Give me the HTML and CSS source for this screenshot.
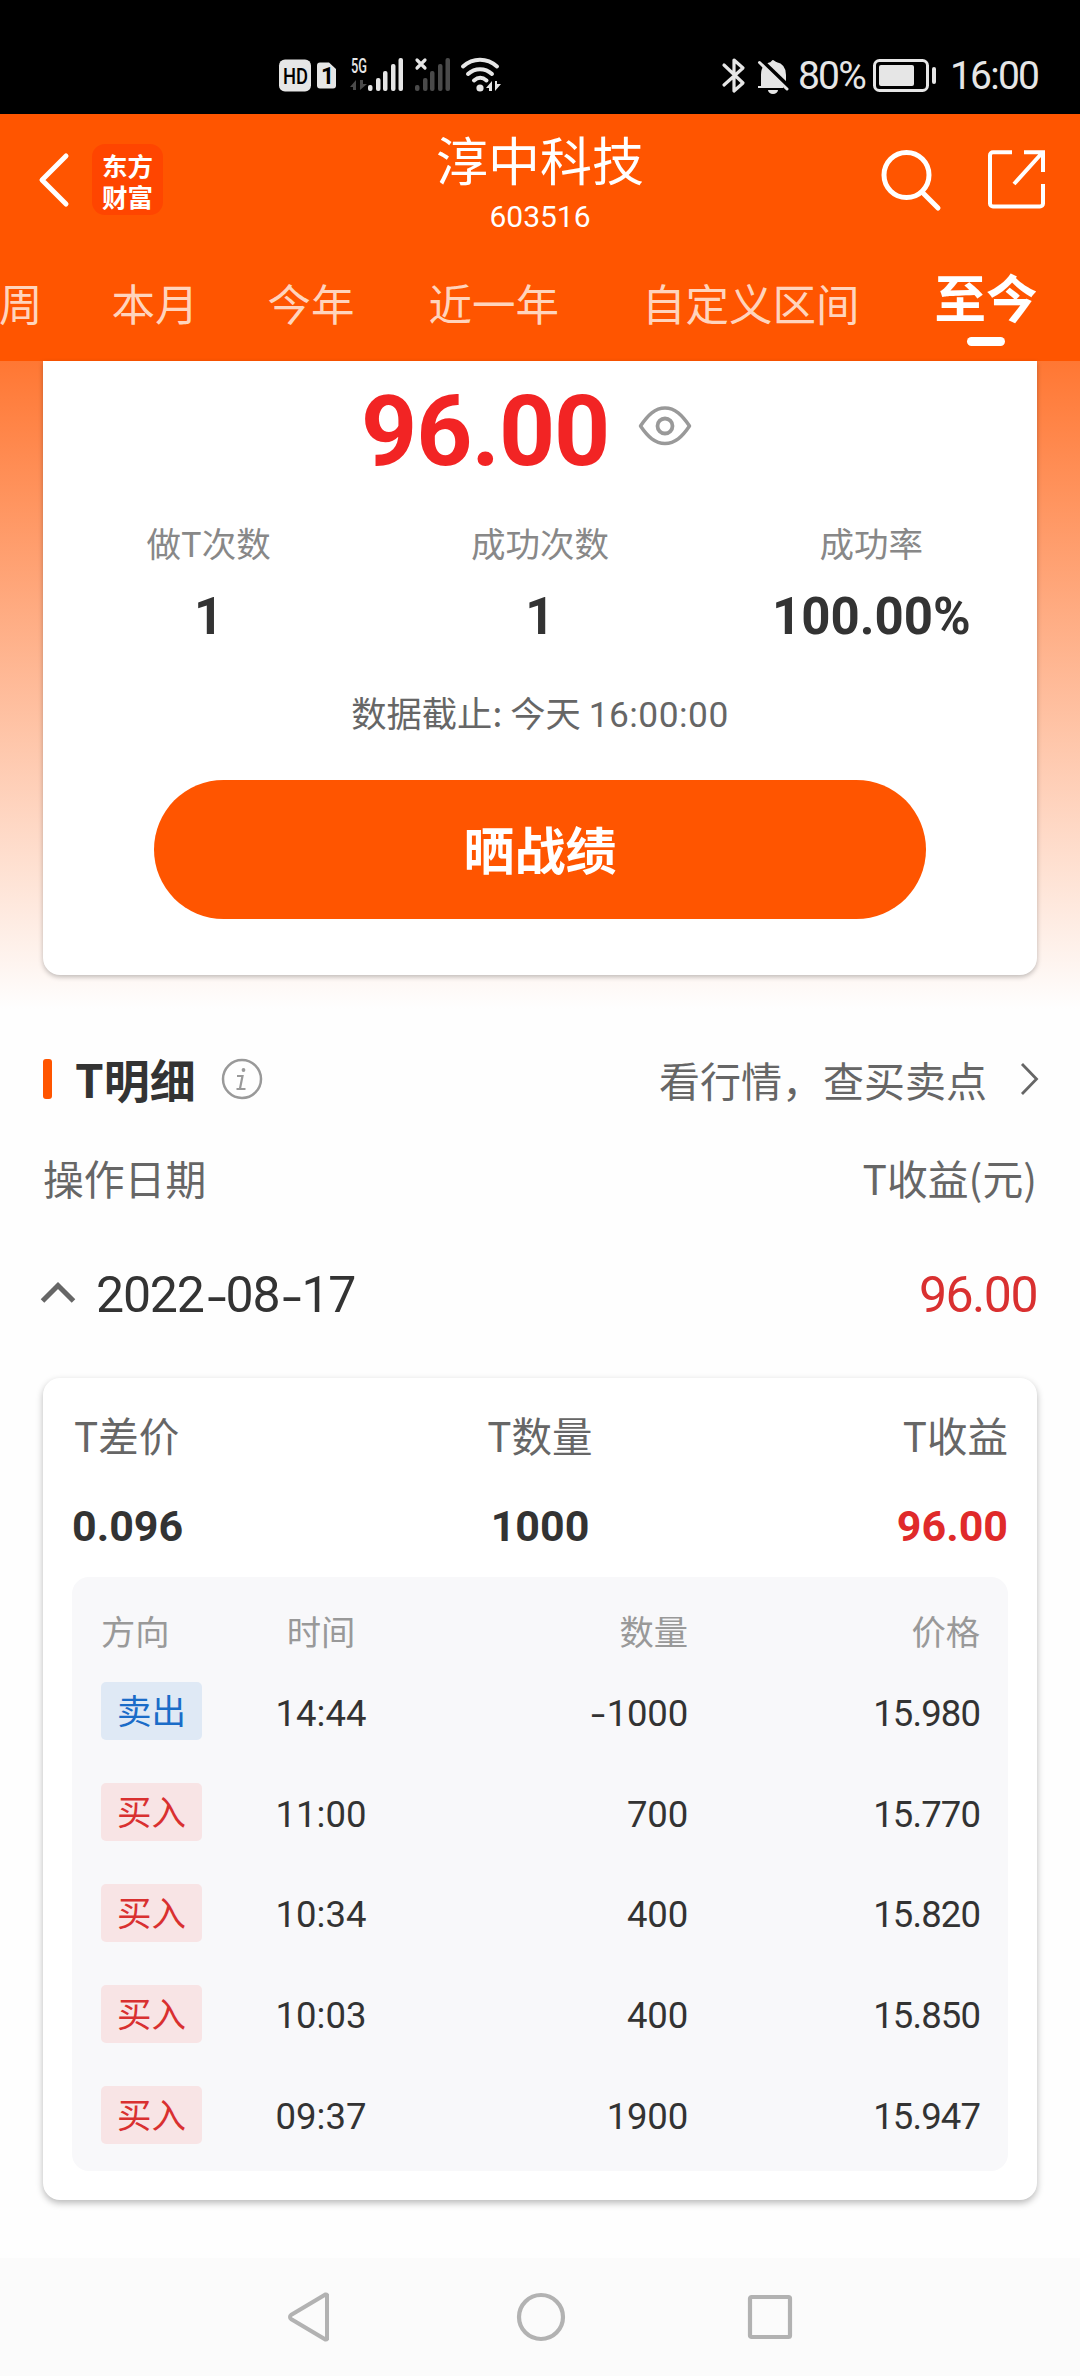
FILE: index.html
```html
<!DOCTYPE html>
<html lang="zh-CN">
<head>
<meta charset="utf-8">
<title>淳中科技 603516</title>
<link rel="stylesheet" href="styles.css">
</head>
<body>
<div class="status">
  <svg class="status-left" width="226" height="40" viewBox="0 0 226 40">
    <rect x="0" y="3.500" width="32" height="32" rx="6" fill="#e6e6e6"/>
    <text x="4" y="28" class="hd" textLength="25" lengthAdjust="spacingAndGlyphs">HD</text>
    <path d="M41 6.500h9l7 6.500v16.500a3 3 0 0 1-3 3H41a3 3 0 0 1-3-3v-20a3 3 0 0 1 3-3z" fill="#e6e6e6"/>
    <text x="42" y="28" class="one">1</text>
    <text x="72" y="17" class="net" textLength="16" lengthAdjust="spacingAndGlyphs">5G</text>
    <g fill="#4a4a4a"><path d="M77 34V24l-6 7h3v3zM81 24v10l7-6h-4v-4z"/>
      <rect x="136" y="29" width="4.500" height="6" rx="2"/><rect x="144" y="22" width="4.500" height="13" rx="2"/><rect x="151" y="15" width="4.500" height="20" rx="2"/><rect x="159" y="8" width="4.500" height="27" rx="2"/><rect x="166.500" y="2" width="4.500" height="33" rx="2"/></g>
    <g fill="#e6e6e6"><rect x="89" y="29" width="4.500" height="6" rx="2"/><rect x="97" y="22" width="4.500" height="13" rx="2"/><rect x="104" y="15" width="4.500" height="20" rx="2"/><rect x="112" y="8" width="4.500" height="27" rx="2"/><rect x="119.500" y="2" width="4.500" height="33" rx="2"/></g>
    <path d="M138 4l8 8M146 4l-8 8" stroke="#e6e6e6" stroke-width="3.200" stroke-linecap="round"/>
    <g fill="none" stroke="#e6e6e6" stroke-width="4" stroke-linecap="round"><path d="M184 10.500C194 1.500 208 1.500 218 10.500M189 18c7-6.500 17-6.500 24 0M195 24.500c4-3.500 8.500-3.500 12.500 0"/></g>
    <circle cx="201" cy="32" r="3.600" fill="#e6e6e6"/>
    <path d="M213 35V25l-6 7h3v3zM216 25v10l6-7h-4v-3z" fill="#e6e6e6"/>
  </svg>
  <div class="status-right">
    <svg width="72" height="40" viewBox="0 0 72 40">
      <path d="M3 9l19 18-9 8V4l9 8L3 29" fill="none" stroke="#e6e6e6" stroke-width="3.200" stroke-linecap="round" stroke-linejoin="round"/>
      <path d="M37 31h25M41 30V19c0-7 4-11 9-12l2-2 3 2c5 1 9 5 9 12v11z" fill="#e6e6e6" stroke="#e6e6e6" stroke-width="2" stroke-linejoin="round"/>
      <path d="M47 34h10a5 4 0 0 1-10 0z" fill="#e6e6e6"/>
      <path d="M40 4l28 27" stroke="#000" stroke-width="4.500"/>
      <path d="M38.500 6.500L66 33" stroke="#e6e6e6" stroke-width="3" stroke-linecap="round"/>
    </svg>
    <span class="pct">80%</span>
    <svg class="batt" width="64" height="34" viewBox="0 0 64 34">
      <rect x="1.500" y="1.500" width="53" height="30" rx="5" fill="none" stroke="#e6e6e6" stroke-width="3"/>
      <rect x="6" y="6" width="35" height="21" rx="2" fill="#e6e6e6"/>
      <rect x="59" y="8" width="4" height="17" rx="2" fill="#e6e6e6"/>
    </svg>
    <span class="clock">16:00</span>
  </div>
</div>

<header class="header">
  <div class="topbar">
    <div class="side">
      <svg width="30" height="54" viewBox="0 0 30 54"><path d="M27 3L3 27l24 24" fill="none" stroke="#fff" stroke-width="5" stroke-linecap="round" stroke-linejoin="round"/></svg>
      <div class="logo"><span>东方</span><span>财富</span></div>
    </div>
    <div class="title"><div class="name">淳中科技</div><div class="code">603516</div></div>
    <div class="side end">
      <svg width="60" height="62" viewBox="0 0 60 62"><circle cx="25.500" cy="26" r="22.500" fill="none" stroke="#fff" stroke-width="5"/><path d="M41 43l16 16" stroke="#fff" stroke-width="5" stroke-linecap="round"/></svg>
      <svg width="58" height="59" viewBox="0 0 58 59"><path d="M24 2.200H5a3 3 0 0 0-3 3V53.500a3 3 0 0 0 3 3H52a3 3 0 0 0 3-3V34M36 2.200h19V22M54 3L26 34" fill="none" stroke="#fff" stroke-width="4"/></svg>
    </div>
  </div>
  <nav class="tabs">
    <span>周</span><span>本月</span><span>今年</span><span>近一年</span><span>自定义区间</span><span class="on">至今</span>
  </nav>
</header>

<main class="content">
  <section class="summary">
    <div class="total"><span>96.00</span>
      <svg width="54" height="42" viewBox="0 0 54 42"><path d="M2.500 21C10 10 17 3 27 3s17 7 24.500 18C44 32 37 38.500 27 38.500S10 32 2.500 21z" fill="none" stroke="#999" stroke-width="3.500" stroke-linejoin="round"/><circle cx="27" cy="21" r="7.500" fill="none" stroke="#999" stroke-width="3.800"/></svg>
    </div>
    <div class="stats">
      <div><label>做T次数</label><b>1</b></div>
      <div><label>成功次数</label><b>1</b></div>
      <div><label>成功率</label><b>100.00%</b></div>
    </div>
    <p class="asof">数据截止: 今天 <span>16:00:00</span></p>
    <button class="share">晒战绩</button>
  </section>

  <div class="section-head">
    <i class="bar"></i><h2>T明细</h2>
    <svg width="42" height="42" viewBox="0 0 42 42"><circle cx="21" cy="21" r="19" fill="none" stroke="#999" stroke-width="2.500"/><circle cx="22.500" cy="12" r="1.900" fill="#999"/><path d="M16 18h5.500l-2.500 12.500M15.500 31h9" fill="none" stroke="#999" stroke-width="2.200"/></svg>
    <span class="link">看行情，查买卖点</span>
    <svg width="19" height="34" viewBox="0 0 19 34"><path d="M2 2l14.500 15L2 32" fill="none" stroke="#666" stroke-width="2.800"/></svg>
  </div>
  <div class="cols"><span>操作日期</span><span>T收益(元)</span></div>
  <div class="day">
    <svg width="36" height="24" viewBox="0 0 36 24"><path d="M2.500 20L18 4.500 33.500 20" fill="none" stroke="#666" stroke-width="5"/></svg>
    <span class="date">2022<i>-</i>08<i>-</i>17</span><span class="profit">96.00</span>
  </div>

  <section class="detail">
    <div class="trio">
      <div><label>T差价</label><b>0.096</b></div>
      <div><label>T数量</label><b>1000</b></div>
      <div><label>T收益</label><b class="red">96.00</b></div>
    </div>
    <div class="trades">
      <div class="row head"><span>方向</span><span>时间</span><span>数量</span><span>价格</span></div>
      <div class="row"><em class="sell">卖出</em><span>14:44</span><span><i>-</i>1000</span><span>15.980</span></div>
      <div class="row"><em>买入</em><span>11:00</span><span>700</span><span>15.770</span></div>
      <div class="row"><em>买入</em><span>10:34</span><span>400</span><span>15.820</span></div>
      <div class="row"><em>买入</em><span>10:03</span><span>400</span><span>15.850</span></div>
      <div class="row"><em>买入</em><span>09:37</span><span>1900</span><span>15.947</span></div>
    </div>
  </section>
</main>

<footer class="navbar">
  <svg width="48" height="52" viewBox="0 0 48 52"><path d="M40 4v44a1.500 1.500 0 0 1-1.500.5L4 28a2.500 2.500 0 0 1 0-4L38.500 3.500A1.500 1.500 0 0 1 40 4z" fill="none" stroke="#b2b2b2" stroke-width="4"/></svg>
  <svg width="52" height="52" viewBox="0 0 52 52"><circle cx="26" cy="26" r="22" fill="none" stroke="#b2b2b2" stroke-width="4.200"/></svg>
  <svg width="46" height="46" viewBox="0 0 46 46"><rect x="3" y="3" width="40" height="40" rx="1.500" fill="none" stroke="#b2b2b2" stroke-width="4.200"/></svg>
</footer>
</body>
</html>
```
FILE: styles.css
```css
* { box-sizing: border-box; margin: 0; padding: 0; }
body {
  width: 1080px; height: 2376px; overflow: hidden;
  display: flex; flex-direction: column;
  background: #fefefe; color: #333;
  font-family: "Noto Sans CJK SC", sans-serif;
}
svg { display: block; flex: none; overflow: visible; }
i, em { font-style: normal; }

/* status bar */
.status {
  height: 114px; flex: none; background: #000; color: #e6e6e6;
  display: flex; justify-content: space-between; align-items: flex-start;
  padding: 56px 42px 0 279px;
  font-family: Roboto, sans-serif;
}
.hd { font: 500 22px Roboto, sans-serif; fill: #000; }
.one { font: 700 23px Roboto, sans-serif; fill: #000; }
.net { font: 500 20px Roboto, sans-serif; fill: #e6e6e6; }
.status-right { display: flex; align-items: flex-start; }
.status-right > svg:first-child { margin-right: 5px; }
.pct, .clock { font-size: 39px; line-height: 40px; white-space: nowrap; letter-spacing: -1.8px; }
.pct { width: 70px; }
.batt { margin: 3px 13px 0 5px; }
.clock { width: 88px; }

/* header */
.header { height: 247px; flex: none; background: #ff5500; color: #fff; }
.topbar { height: 140px; display: flex; padding: 0 34px 0 39px; }
.side { width: 220px; display: flex; align-items: center; padding-bottom: 7px; height: 138px; gap: 23px; }
.side:first-child { width: 215px; }
.end { justify-content: flex-end; gap: 47px; }
.logo {
  width: 71px; height: 71px; border-radius: 13px; background: #ff4500;
  display: flex; flex-direction: column; align-items: center; justify-content: center;
}
.logo span { font-size: 25.5px; font-weight: 700; line-height: 31px; }
.title { flex: 1; text-align: center; padding-top: 15px; }
.name { font-size: 52px; line-height: 60px; }
.code { font: 30px/40px Roboto, sans-serif; margin-top: 8px; }
.tabs { height: 107px; display: flex; align-items: flex-start; font-size: 43.5px; line-height: 60px; color: #ffd4bd; white-space: nowrap; padding-top: 19px; margin-left: -1px; }
.tabs span { margin-right: 69px; flex: none; }
.tabs span:nth-child(3) { margin-right: 74px; }
.tabs span:nth-child(4) { margin-right: 83px; }
.tabs span:nth-child(5) { margin-right: 75px; }
.tabs .on {
  color: #fff; font-size: 51.5px; font-weight: 700; line-height: 60px; margin: -7px 0 0;
  display: flex; flex-direction: column; align-items: center;
}
.tabs .on::after { content: ""; width: 38px; height: 9px; border-radius: 5px; background: #fff; margin-top: 11px; }

/* summary card */
.content { height: 1897px; flex: none; padding: 0 43px; background: linear-gradient(#ff7733, #fefefe 648px); }
.summary {
  height: 614px; background: #fff; border-radius: 0 0 17px 17px;
  box-shadow: 0 2px 5px rgba(0, 0, 0, .25);
}
.total { display: flex; height: 134px; padding: 11px 0 0 318px; }
.total span { width: 250px; font: 700 98px/119px Roboto, sans-serif; letter-spacing: -1px; color: #f22424; }
.total svg { margin: 33px 0 0 27px; }
.stats { display: grid; grid-template-columns: repeat(3, 1fr); height: 158px; text-align: center; }
.stats label { display: block; font-size: 34.5px; line-height: 50px; margin-top: 22px; color: #888; }
.stats b { display: block; font: 700 51px/60px Roboto, sans-serif; margin-top: 20px; }
.asof { height: 50px; font-size: 35.3px; line-height: 50px; text-align: center; margin-top: 34px; color: #666; }
.asof span { font-family: Roboto, sans-serif; letter-spacing: .5px; }
.share {
  display: block; width: 772px; height: 139px; border: 0; border-radius: 70px;
  margin: 43px auto 0; background: #ff5500; color: #fff; padding-bottom: 4px;
  font: 700 51px/60px "Noto Sans CJK SC", sans-serif;
}

/* detail heading */
.section-head { height: 60px; margin-top: 74px; display: flex; align-items: center; }
.bar { width: 9px; height: 40px; border-radius: 3px; background: #ff5500; }
.section-head h2 { font-size: 46px; line-height: 60px; margin: -2px 25px 0 23px; }
.link { font-size: 41px; line-height: 60px; color: #666; margin: -1px 33px 0 auto; }
.section-head svg:last-child { margin-right: -2px; }
.cols { display: flex; justify-content: space-between; font-size: 40.8px; line-height: 60px; margin-top: 39px; color: #666; }
.day { height: 60px; margin-top: 57px; display: flex; align-items: center; font: 50px/60px Roboto, sans-serif; }
.day svg { margin: -5px 20px 0 -3px; }
.date { letter-spacing: -1.2px; }
.date i { display: inline-block; width: 22px; text-align: center; transform: translate(1px, 2px) scaleX(1.4); }
.profit { margin-left: auto; color: #d93030; letter-spacing: -1.5px; }

/* trade card */
.detail {
  height: 822px; margin-top: 53px; padding: 27px 29px 29px; background: #fff; border-radius: 17px;
  box-shadow: 0 3px 7px rgba(0, 0, 0, .28);
}
.trio { display: grid; grid-template-columns: repeat(3, 1fr); height: 172px; }
.trio div:nth-child(1) label { padding-left: 2px; }
.trio div:nth-child(2) { text-align: center; }
.trio div:nth-child(3) { text-align: right; }
.trio label { display: block; font-size: 40.5px; line-height: 60px; color: #666; }
.trio b { display: block; font: 700 43px/50px Roboto, sans-serif; margin-top: 36px; }
.trio .red { color: #e02a2a; }
.trades { height: 594px; background: #f8f8fa; border-radius: 17px; padding: 24px 28px 0 29px; }
.row {
  display: grid; grid-template-columns: 148px 144px 1fr 292px; align-items: center;
  height: 100.8px; text-align: right; font: 36.5px/58px Roboto, sans-serif; color: #333;
}
.row span { padding-top: 5px; }
.row span:nth-child(2) { text-align: center; }
.row span:nth-child(3) { letter-spacing: -.2px; }
.row span:nth-child(4) { letter-spacing: -.9px; }
.row i { display: inline-block; width: 14px; text-align: center; transform: translate(-2px, 1px) scaleX(1.4); }
.row.head { height: 60px; font: 34.3px/58px "Noto Sans CJK SC", sans-serif; color: #999; }
.row.head span { padding: 0 0 2px; letter-spacing: 0; }
.row.head span:first-child { text-align: left; }
.row em {
  width: 101px; height: 58px; border-radius: 5px; text-align: center;
  background: #f8e4e5; color: #d93030; font: 34.500px/55px "Noto Sans CJK SC", sans-serif;
}
.row .sell { background: #dfe9f5; color: #1a6cc8; }

/* system navigation */
.navbar { height: 118px; flex: none; background: #fbfbfb; display: flex; align-items: center; justify-content: space-between; padding: 0 287px 0 287px; }
```
